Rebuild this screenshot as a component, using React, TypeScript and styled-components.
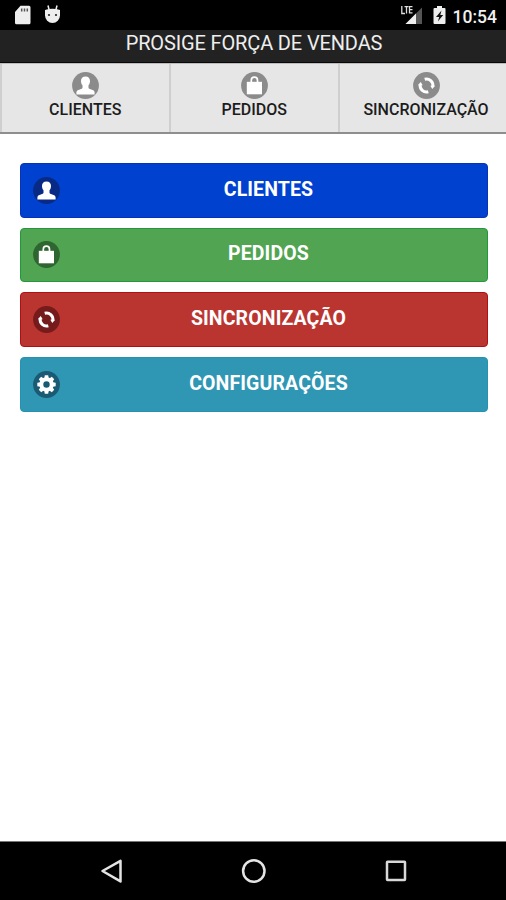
import React from "react";
import styled, { createGlobalStyle } from "styled-components";

const GlobalStyle = createGlobalStyle`
  * { box-sizing: border-box; }
  body { margin: 0; background: #fff; font-family: Roboto, "Liberation Sans", sans-serif; }
`;

const Screen = styled.div`
  display: flex;
  flex-direction: column;
  width: 506px;
  height: 900px;
  background: #fff;
  overflow: hidden;
`;

const StatusBar = styled.header`
  display: flex;
  align-items: center;
  height: 30px;
  padding: 0 9px 0 14px;
  background: #000;
  color: #f0f0f0;
`;

const StatusGroup = styled.div<{ $gap: number }>`
  display: flex;
  align-items: center;
  gap: ${(p) => p.$gap}px;
`;

const Spacer = styled.div`
  flex: 1;
`;

const Clock = styled.span`
  margin: 3px 0 0 -3px;
  font-size: 17.5px;
  font-weight: 500;
  line-height: 20px;
`;

const TitleBar = styled.h1`
  height: 33px;
  margin: 0;
  padding-left: 2px;
  background: #222;
  border-bottom: 1px solid #080808;
  color: #eee;
  font-size: 20px;
  font-weight: 400;
  line-height: 26px;
  letter-spacing: -0.14px;
  text-align: center;
`;

const TabBar = styled.nav`
  display: flex;
  flex: none;
  height: 71px;
  background: #e6e6e6;
  border-top: 1px solid #bcbcbc;
  border-bottom: 2px solid #8e8e8e;
`;

const Tab = styled.a<{ $width: number; $shift?: number }>`
  display: flex;
  flex: none;
  flex-direction: column;
  align-items: center;
  width: ${(p) => p.$width}px;
  padding: 8px 0 0 ${(p) => p.$shift ?? 0}px;
  border-left: 2px solid #cfcfcf;
  color: #1c1c1c;
`;

const TabLabel = styled.span`
  margin-top: 1px;
  font-size: 16px;
  font-weight: 500;
  line-height: 19px;
`;

const Menu = styled.main`
  display: flex;
  flex: 1;
  flex-direction: column;
  gap: 10px;
  padding: 29px 18px 0 20px;
`;

const MenuButton = styled.button<{ $fill: string; $edge: string }>`
  display: flex;
  align-items: center;
  height: 54.67px;
  padding: 0 0 0 12px;
  background: ${(p) => p.$fill};
  border: 1px solid ${(p) => p.$edge};
  border-radius: 4px;
  color: #fff;
  font-family: inherit;
`;

const MenuLabel = styled.span`
  flex: 1;
  padding: 0 10px 1px 0;
  font-size: 19.500px;
  font-weight: 700;
  line-height: 24px;
  text-align: center;
  letter-spacing: 0.12px;
`;

const NavBar = styled.footer`
  display: flex;
  flex: none;
  align-items: center;
  justify-content: space-between;
  height: 59px;
  padding: 0 97px 0 99px;
  background: #000;
  border-top: 1px solid #777;
`;

const Svg = styled.svg`
  display: block;
  flex: none;
`;

type IconKind = "person" | "bag" | "refresh" | "gear";

const GEAR_TEETH = [0, 45, 90, 135, 180, 225, 270, 315];

function RoundIcon({ kind, disc }: { kind: IconKind; disc: string }) {
  return (
    <Svg width="27" height="27" viewBox="0 0 27 27">
      <circle cx="13.5" cy="13.5" r="13.4" fill={disc} />
      {kind === "person" && (
        <path
          fill="#fff"
          d="M13.500 4.500c2.900 0 4.600 1.900 4.500 4.500 0 2-.6 3.200-1.500 4.300v2.500c0 .9 1 1.200 2.600 1.700 2.200.7 3.500 1.300 3.500 3v1.900H4.400v-1.900c0-1.700 1.300-2.300 3.500-3 1.600-.5 2.600-.8 2.600-1.700v-2.500C9.600 12.200 9 11 9 9c-.1-2.600 1.600-4.500 4.500-4.500z"
        />
      )}
      {kind === "bag" && (
        <>
          <path fill="#fff" d="M5.800 9.800h15.200v12.500H5.800z" />
          <path fill="none" stroke="#fff" strokeWidth="1.700" d="M10.300 11V8.200a3.100 3.100 0 0 1 6.200 0V11" />
        </>
      )}
      {kind === "refresh" && (
        <g fill="none" stroke="#fff" strokeWidth="3">
          <path d="M11.700 7.300a6.400 6.400 0 0 1 8.100 7.200" />
          <path d="M15.300 19.700a6.400 6.400 0 0 1-8.100-7.200" />
          <path fill="#fff" stroke="none" d="M17.300 13.700h4.800l-2.800 3.300zM9.700 13.300H4.900l2.800-3.300z" />
        </g>
      )}
      {kind === "gear" && (
        <>
          <circle cx="13.500" cy="13.500" r="5.200" fill="none" stroke="#fff" strokeWidth="4" />
          {GEAR_TEETH.map((angle) => (
            <path key={angle} fill="#fff" d="M11.200 7.600l.6-3.300h3.400l.6 3.300z" transform={`rotate(${angle} 13.5 13.5)`} />
          ))}
        </>
      )}
    </Svg>
  );
}

const tabs = [
  { label: "CLIENTES", icon: "person", width: 168.5, shift: 0 },
  { label: "PEDIDOS", icon: "bag", width: 169.5, shift: 0 },
  { label: "SINCRONIZAÇÃO", icon: "refresh", width: 168, shift: 6 },
] as const;

const actions = [
  { label: "CLIENTES", icon: "person", fill: "#0042cf", edge: "#0a32b8", disc: "#082a85" },
  { label: "PEDIDOS", icon: "bag", fill: "#51a451", edge: "#1f9a3c", disc: "#2e6530" },
  { label: "SINCRONIZAÇÃO", icon: "refresh", fill: "#bb3530", edge: "#b01014", disc: "#761b1b" },
  { label: "CONFIGURAÇÕES", icon: "gear", fill: "#2f96b4", edge: "#2592b2", disc: "#1a5a72" },
] as const;

export default function App() {
  return (
    <Screen>
      <GlobalStyle />
      <StatusBar>
        <StatusGroup $gap={13}>
          <Svg width="17" height="20" viewBox="0 0 17 20">
            <path fill="#eee" d="M6.500.8h8.500a1.500 1.500 0 0 1 1.500 1.500v15.400a1.500 1.500 0 0 1-1.500 1.500H2.500A1.500 1.500 0 0 1 1 17.700V7z" />
            <path stroke="#555" strokeWidth="1.500" d="M7.700 3.500v3M10.500 3.500v3M13.300 3.500v3" />
          </Svg>
          <Svg width="17" height="20" viewBox="0 0 17 20">
            <path stroke="#eee" strokeWidth="1.500" d="M4 .5l1 4M13 .5l-1 4" />
            <path fill="#eee" d="M1 5Q8.500 2.500 16 5v5.500a7.500 7.500 0 0 1-15 0z" />
            <circle cx="5" cy="10" r="1.100" fill="#222" />
            <circle cx="12" cy="10" r="1.100" fill="#222" />
          </Svg>
        </StatusGroup>
        <Spacer />
        <StatusGroup $gap={10}>
          <Svg width="23" height="20" viewBox="0 0 23 20">
            <path fill="#555" d="M22 2.500V19H5.500z" />
            <path fill="#eee" d="M16 8.500V19H5.500z" />
            <path fill="none" stroke="#ddd" strokeWidth="1.300" d="M1.800 1v7.500H5M4.500 1.600h4M6.500 1.600V8.500M12.500 1.600H9.500v6.300h3M9.500 4.700h3" />
          </Svg>
          <Svg width="13" height="20" viewBox="0 0 13 20">
            <path fill="#eee" d="M4 1h5v2h2.500q1 0 1 1v14q0 1-1 1h-10q-1 0-1-1V4q0-1 1-1H4z" />
            <path fill="#111" d="M8.500 5.500L3 12h3.200l-1.300 4.500L10.200 10H7.300z" />
          </Svg>
          <Clock>10:54</Clock>
        </StatusGroup>
      </StatusBar>
      <TitleBar>PROSIGE FORÇA DE VENDAS</TitleBar>
      <TabBar>
        {tabs.map((tab) => (
          <Tab key={tab.label} $width={tab.width} $shift={tab.shift}>
            <RoundIcon kind={tab.icon} disc="#8b8b8b" />
            <TabLabel>{tab.label}</TabLabel>
          </Tab>
        ))}
      </TabBar>
      <Menu>
        {actions.map((action) => (
          <MenuButton key={action.label} $fill={action.fill} $edge={action.edge}>
            <RoundIcon kind={action.icon} disc={action.disc} />
            <MenuLabel>{action.label}</MenuLabel>
          </MenuButton>
        ))}
      </Menu>
      <NavBar>
        <Svg width="26" height="26" viewBox="0 0 26 26">
          <path fill="none" stroke="#e4e4e4" strokeWidth="2.500" strokeLinejoin="round" d="M21.500 2.800v20.600L3.500 13z" />
        </Svg>
        <Svg width="26" height="26" viewBox="0 0 26 26">
          <circle cx="12.800" cy="13" r="10.700" fill="none" stroke="#e4e4e4" strokeWidth="2.500" />
        </Svg>
        <Svg width="26" height="26" viewBox="0 0 26 26">
          <rect x="4" y="3.700" width="18" height="18.300" rx=".5" fill="none" stroke="#d8d8d8" strokeWidth="2.500" />
        </Svg>
      </NavBar>
    </Screen>
  );
}
